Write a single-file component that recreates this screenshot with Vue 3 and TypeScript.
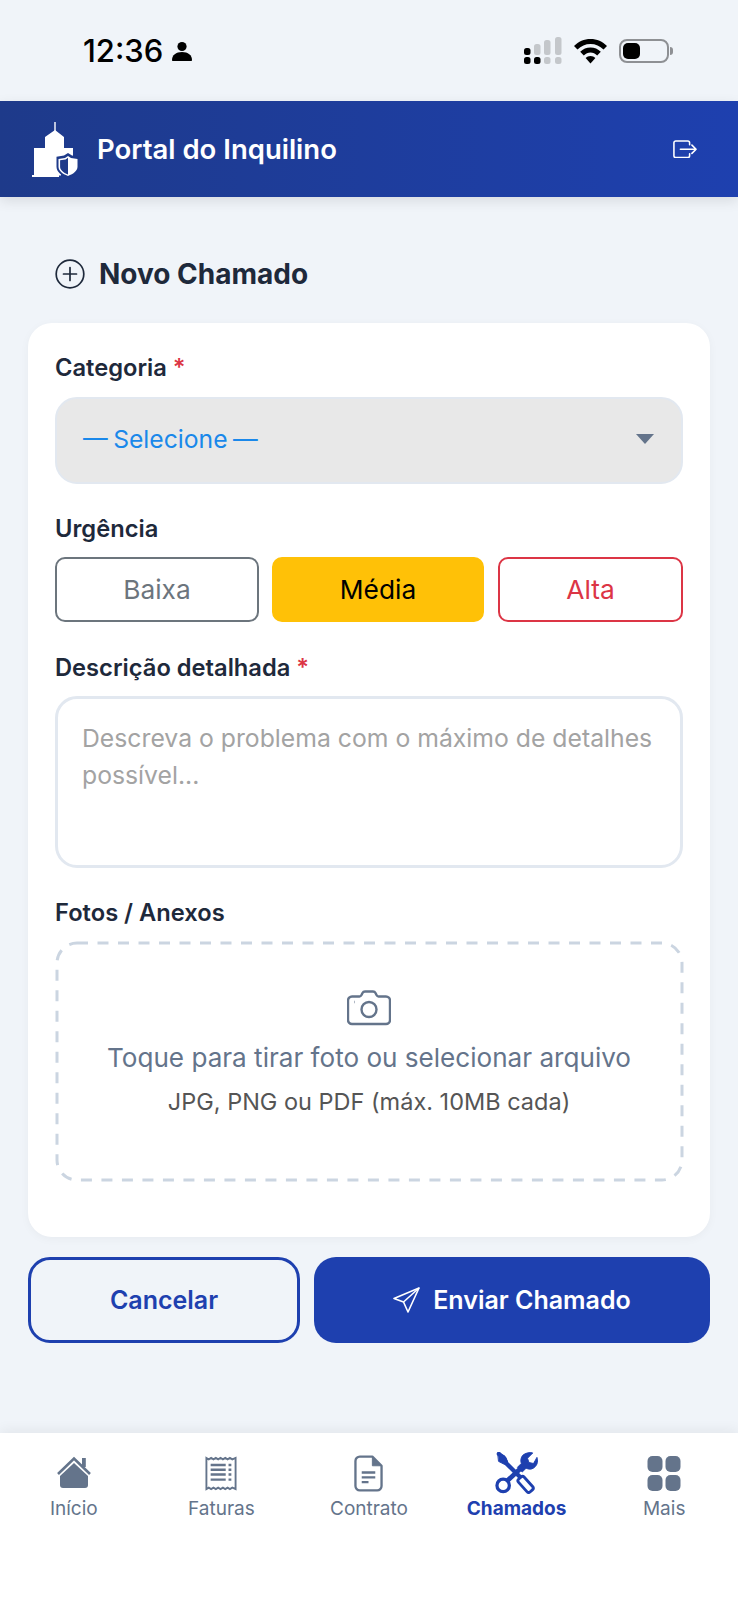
<template>
  <div class="page">
    <!-- status bar -->
    <div class="status">
      <div class="status-left">
        <span class="clock">12:36</span>
        <svg width="20" height="20" viewBox="0 0 20 20" fill="#000">
          <circle cx="10" cy="5.5" r="4.6" />
          <path d="M0 19c0-5 4-8 10-8s10 3 10 8c0 .6-.4 1-1 1H1c-.6 0-1-.4-1-1z" />
        </svg>
      </div>
      <div class="status-right">
        <svg width="38" height="28" viewBox="0 0 38 28">
          <g fill="#000">
            <rect x="0" y="11" width="6.5" height="7" rx="2.500" />
            <rect x="0" y="20" width="6.5" height="7" rx="2.500" />
            <rect x="10" y="20" width="6.5" height="7" rx="2.500" />
          </g>
          <g fill="#c4c7cb">
            <rect x="10" y="7" width="6.5" height="11" rx="2.500" />
            <rect x="20" y="3" width="6.5" height="15" rx="2.500" />
            <rect x="20" y="20" width="6.5" height="7" rx="2.500" />
            <rect x="31" y="0" width="6.5" height="18" rx="2.500" />
            <rect x="31" y="20" width="6.5" height="7" rx="2.500" />
          </g>
        </svg>
        <svg width="33" height="25" viewBox="0 0 33 25">
          <path d="M16.5 0C10 0 4.500 2.500 0 7l3.500 3.500C7 7 11.500 5 16.500 5S26 7 29.500 10.500L33 7C28.500 2.500 23 0 16.500 0z" />
          <path d="M16.500 8.500c-4 0-7.500 1.500-10.300 4.300L9.800 16.400c2-1.800 4.200-2.900 6.700-2.900s4.700 1.100 6.700 2.900l3.600-3.600C24 10 20.500 8.500 16.500 8.500z" />
          <path d="M16.500 17c-2 0-3.600.8-4.900 2l4.900 5.500 4.900-5.500c-1.300-1.200-2.900-2-4.900-2z" />
        </svg>
        <div class="battery">
          <span class="battery-level"></span>
        </div>
        <span class="battery-cap"></span>
      </div>
    </div>

    <!-- header -->
    <header class="topbar">
      <div class="brand">
        <svg width="50" height="58" viewBox="0 0 50 58" fill="#fff">
          <rect x="23.300" y="2" width="1.400" height="10" />
          <path d="M24 10l9 7v11h9v12H30v15.500H3V28h11V17z" />
          <path d="M1 55h27v2H1z" />
          <path d="M37 33l4 2.500 7.500 1.200v10c0 5-4.500 8.800-11.500 11.300C30 55.500 25.500 51.700 25.500 46.700v-10l7.500-1.200z" fill="#1e3a8a" />
          <path d="M37 36l3 2 6.500 1v7.700c0 4-3.800 7-9.500 9.200-5.700-2.200-9.500-5.200-9.500-9.200V39l6.500-1z" />
          <path d="M37 37.800l-2.400 1.600-5.500.9v6.400c0 3.200 3 5.800 7.900 7.700z" fill="#1e3a8a" />
        </svg>
        <span class="brand-name">Portal do Inquilino</span>
      </div>
      <svg width="24" height="18.500" viewBox="0 0 26 20" fill="none" stroke="#fff" stroke-width="1.700" stroke-linecap="round" stroke-linejoin="round">
        <path d="M18 5V3a2 2 0 0 0-2-2H3a2 2 0 0 0-2 2v14a2 2 0 0 0 2 2h13a2 2 0 0 0 2-2v-2" />
        <path d="M8 10h17M20.500 5.500L25 10l-4.500 4.500" />
      </svg>
    </header>

    <main class="content">
      <h1 class="title">
        <svg width="30" height="30" viewBox="0 0 30 30" fill="none" stroke="#1e293b" stroke-width="1.700" stroke-linecap="round">
          <circle cx="15" cy="15" r="13.800" />
          <path d="M15 8.500v13M8.500 15h13" />
        </svg>
        Novo Chamado
      </h1>

      <section class="card">
        <label class="label">Categoria <span class="req">*</span></label>
        <div class="select">
          <span>— Selecione —</span>
          <svg width="18" height="10" viewBox="0 0 18 10" fill="#64748b"><path d="M0 0h18L9 10z" /></svg>
        </div>

        <label class="label urg-label">Urgência</label>
        <div class="urgency">
          <button class="urg baixa">Baixa</button>
          <button class="urg media">Média</button>
          <button class="urg alta">Alta</button>
        </div>

        <label class="label desc-label">Descrição detalhada <span class="req">*</span></label>
        <textarea class="desc" placeholder="Descreva o problema com o máximo de detalhes possível..."></textarea>

        <label class="label photo-label">Fotos / Anexos</label>
        <div class="drop">
          <svg class="drop-border"><rect width="100%" height="100%" rx="20" /></svg>
          <svg width="44" height="36" viewBox="0 0 44 36" fill="none" stroke="#64748b" stroke-width="2.400" stroke-linejoin="round">
            <path d="M5 6.500h7.500c1 0 1.500-.5 2-1.500l1-2C16 2 16.800 1.500 18 1.500h8c1.200 0 2 .5 2.500 1.500l1 2c.5 1 1 1.500 2 1.500H39a4 4 0 0 1 4 4V30a4 4 0 0 1-4 4H5a4 4 0 0 1-4-4V10.500a4 4 0 0 1 4-4z" />
            <circle cx="22" cy="19.500" r="7.500" />
            <path d="M7 12h.5" />
          </svg>
          <p class="drop-main">Toque para tirar foto ou selecionar arquivo</p>
          <p class="drop-sub">JPG, PNG ou PDF (máx. 10MB cada)</p>
        </div>
      </section>

      <div class="actions">
        <button class="btn cancel">Cancelar</button>
        <button class="btn send">
          <svg width="28" height="26" viewBox="0 0 28 26" fill="none" stroke="#fff" stroke-width="1.600" stroke-linejoin="round">
            <path d="M26 1L1 11.500l9.500 3.500L15 25z" />
            <path d="M26 1L10.500 15" />
          </svg>
          Enviar Chamado
        </button>
      </div>
    </main>

    <!-- bottom tabs -->
    <nav class="tabs">
      <div v-for="tab in tabs" :key="tab.name" class="tab" :class="{ active: tab.name === activeTab }">
        <div class="tab-icon">
          <svg v-if="tab.name === 'Início'" width="36" height="34" viewBox="0 0 36 34">
            <path d="M2 18L18 2.500 34 18" fill="none" stroke="#64748b" stroke-width="2.600" />
            <rect x="26" y="2" width="3.800" height="9" fill="#64748b" />
            <path d="M18 7L32 20v9a3 3 0 0 1-3 3H7a3 3 0 0 1-3-3v-9z" fill="#64748b" />
          </svg>
          <svg v-else-if="tab.name === 'Faturas'" width="32" height="35" viewBox="0 0 34 36" fill="none" stroke="#64748b">
            <path d="M1.500 1.500l2.500 1.500 2.500-1.500L9 3l2.500-1.500L14 3l2.500-1.500L19 3l2.500-1.500L24 3l2.500-1.500L29 3l3.500-1.500v33L29 33l-2.500 1.500L24 33l-2.500 1.500L19 33l-2.500 1.500L14 33l-2.500 1.500L9 33l-2.500 1.500L4 33l-2.500 1.500z" stroke-width="2" />
            <path d="M6 9h16M6 14h16M6 19h16M6 24.500h16M25 9h3M25 14h3M25 19h3M25 24.500h3" stroke-width="2.600" />
          </svg>
          <svg v-else-if="tab.name === 'Contrato'" width="29" height="37" viewBox="0 0 30 38" fill="none" stroke="#64748b">
            <path d="M19 1.500H6a4.500 4.500 0 0 0-4.500 4.500v26A4.500 4.500 0 0 0 6 36.500h18a4.500 4.500 0 0 0 4.500-4.500V11z" stroke-width="2.400" stroke-linejoin="round" />
            <path d="M19 2v9h9z" fill="#64748b" stroke-width="1" />
            <path d="M8 18h14M8 23h14M8 28h7" stroke-width="2.400" />
          </svg>
          <svg v-else-if="tab.name === 'Chamados'" width="44" height="42" viewBox="0 0 46 44" fill="none" stroke="#1e40af" stroke-linecap="round">
            <path d="M4 2l6 5 2 5 21 21" stroke-width="4.500" />
            <path d="M3 1l7 3 3 6-3 3-6-3z" fill="#1e40af" stroke-width="1" stroke-linejoin="round" />
            <rect x="28" y="25" width="8" height="18" rx="2.500" transform="rotate(-42 32 34)" fill="#fff" stroke-width="3" />
            <path d="M44 6c1.500 5-.5 9-4 11-2.500 1.500-5 1-7.500 0l-4 4-5-5 4-4c-1-3-.5-6 1.500-8.500C32 1 36 0 39.500 1l-5.500 5.500 1.500 4.500 4.500 1z" fill="#1e40af" stroke-width="1" stroke-linejoin="round" />
            <path d="M27 17L12 31" stroke-width="5" />
            <circle cx="8.500" cy="35" r="6.500" fill="#fff" stroke-width="3.400" />
          </svg>
          <svg v-else width="34" height="36" viewBox="0 0 34 36" fill="#64748b">
            <rect x="0.500" y="1" width="15" height="16" rx="5" />
            <rect x="18.500" y="1" width="15" height="16" rx="5" />
            <rect x="0.500" y="20" width="15" height="16" rx="5" />
            <rect x="18.500" y="20" width="15" height="16" rx="5" />
          </svg>
        </div>
        <span class="tab-name">{{ tab.name }}</span>
      </div>
    </nav>
  </div>
</template>

<script setup lang="ts">
interface Tab {
  name: string;
}

const tabs: Tab[] = [
  { name: 'Início' },
  { name: 'Faturas' },
  { name: 'Contrato' },
  { name: 'Chamados' },
  { name: 'Mais' },
];

const activeTab = 'Chamados';
</script>

<style>
html,
body {
  margin: 0;
  background: #f1f5f9;
}
</style>

<style scoped>
.page {
  width: 738px;
  height: 1600px;
  display: flex;
  flex-direction: column;
  background: #f0f4f9;
  font-family: Inter, "Noto Sans", sans-serif;
  color: #1e293b;
  overflow: hidden;
}

/* status bar */
.status {
  height: 101px;
  display: flex;
  justify-content: space-between;
  align-items: flex-start;
  padding: 33px 65px 0 83px;
  box-sizing: border-box;
  flex-shrink: 0;
}
.status-left {
  display: flex;
  align-items: center;
  gap: 9px;
}
.clock {
  font-size: 31px;
  line-height: 36px;
  font-weight: 500;
  color: #000;
}
.status-right {
  display: flex;
  align-items: center;
  gap: 12px;
  height: 30px;
  margin-top: 3px;
}
.battery {
  width: 50px;
  height: 24px;
  border: 2px solid #8e9094;
  border-radius: 8px;
  box-sizing: border-box;
  padding: 2px;
}
.battery-level {
  display: block;
  width: 17px;
  height: 16px;
  background: #000;
  border-radius: 5px;
}
.battery-cap {
  width: 3px;
  height: 8px;
  background: #8e9094;
  border-radius: 0 3px 3px 0;
  margin-left: -11px;
}

/* header */
.topbar {
  height: 96px;
  flex-shrink: 0;
  display: flex;
  align-items: center;
  justify-content: space-between;
  padding: 0 41px 0 31px;
  background: linear-gradient(90deg, #1e3a8a, #1e40af);
  box-shadow: 0 4px 12px rgba(0, 0, 0, 0.1);
  position: relative;
}
.brand {
  display: flex;
  align-items: center;
  gap: 16px;
}
.brand-name {
  color: #fff;
  font-size: 27.500px;
  font-weight: 600;
}

/* content */
.content {
  flex: 1;
  padding: 0 28px;
}
.title {
  display: flex;
  align-items: center;
  gap: 14px;
  margin: 59px 0 31px 27px;
  font-size: 28px;
  line-height: 36px;
  font-weight: 700;
}
.card {
  background: #fff;
  border-radius: 24px;
  padding: 30px 27px 56px;
  box-shadow: 0 2px 10px rgba(0, 0, 0, 0.04);
}
.label {
  display: block;
  font-size: 23.700px;
  line-height: 30px;
  font-weight: 600;
}
.req {
  color: #dc3545;
}
.select {
  margin-top: 14px;
  height: 87px;
  box-sizing: border-box;
  background: #e8e8e8;
  border: 2px solid #e2e8f0;
  border-radius: 22px;
  display: flex;
  align-items: center;
  justify-content: space-between;
  padding: 0 27px 3px 26px;
  font-size: 24.700px;
  word-spacing: -1.500px;
  color: #1a88ea;
}
.urg-label {
  margin-top: 30px;
}
.urgency {
  display: flex;
  gap: 13px;
  margin-top: 13px;
}
.urg {
  height: 65px;
  box-sizing: border-box;
  border-radius: 10px;
  font-family: inherit;
  font-size: 26.300px;
  background: #fff;
  padding: 0;
}
.baixa {
  width: 204px;
  border: 2px solid #6c757d;
  color: #6c757d;
}
.media {
  width: 212px;
  border: 2px solid #ffc107;
  background: #ffc107;
  color: #000;
}
.alta {
  width: 185px;
  margin-left: 1px;
  border: 2px solid #dc3545;
  color: #dc3545;
}
.desc-label {
  margin-top: 31px;
}
.desc {
  display: block;
  width: 100%;
  height: 172px;
  box-sizing: border-box;
  margin-top: 13px;
  border: 3px solid #e2e8f0;
  border-radius: 22px;
  padding: 21px 24px;
  font-family: inherit;
  font-size: 24.750px;
  line-height: 37px;
  resize: none;
  outline: none;
}
.desc::placeholder {
  color: #a3a3a3;
}
.photo-label {
  margin-top: 30px;
}
.drop {
  position: relative;
  margin-top: 13px;
  height: 240px;
  box-sizing: border-box;
  display: flex;
  flex-direction: column;
  align-items: center;
  padding-top: 49px;
}
.drop-border {
  position: absolute;
  left: 1.500px;
  top: 1.500px;
  width: calc(100% - 3px);
  height: calc(100% - 3px);
  overflow: visible;
  fill: none;
  stroke: #cbd5e1;
  stroke-width: 3;
  stroke-dasharray: 11 9.500;
}
.drop-main {
  margin: 14px 0 0;
  font-size: 26.100px;
  line-height: 36px;
  color: #64748b;
}
.drop-sub {
  margin: 10px 0 0;
  font-size: 23.500px;
  line-height: 32px;
  color: #555;
}

/* buttons */
.actions {
  display: flex;
  gap: 14px;
  margin-top: 20px;
}
.btn {
  height: 86px;
  box-sizing: border-box;
  border-radius: 22px;
  font-family: inherit;
  font-size: 25px;
  font-weight: 600;
  display: flex;
  align-items: center;
  justify-content: center;
  gap: 12px;
  padding: 0;
}
.cancel {
  width: 272px;
  background: transparent;
  border: 3px solid #1e40af;
  color: #1e40af;
}
.send {
  flex: 1;
  background: #1e40af;
  border: none;
  color: #fff;
}

/* tabs */
.tabs {
  height: 167px;
  flex-shrink: 0;
  background: #fff;
  display: grid;
  grid-template-columns: repeat(5, 1fr);
  padding: 0;
  box-shadow: 0 -3px 12px rgba(0, 0, 0, 0.06);
}
.tab {
  display: flex;
  flex-direction: column;
  align-items: center;
  padding-top: 17px;
}
.tab-icon {
  height: 46px;
  display: flex;
  align-items: center;
  justify-content: center;
}
.tab-name {
  margin-top: 0;
  font-size: 19px;
  line-height: 26px;
  color: #64748b;
}
.active .tab-name {
  color: #1e40af;
  font-weight: 700;
}
</style>
